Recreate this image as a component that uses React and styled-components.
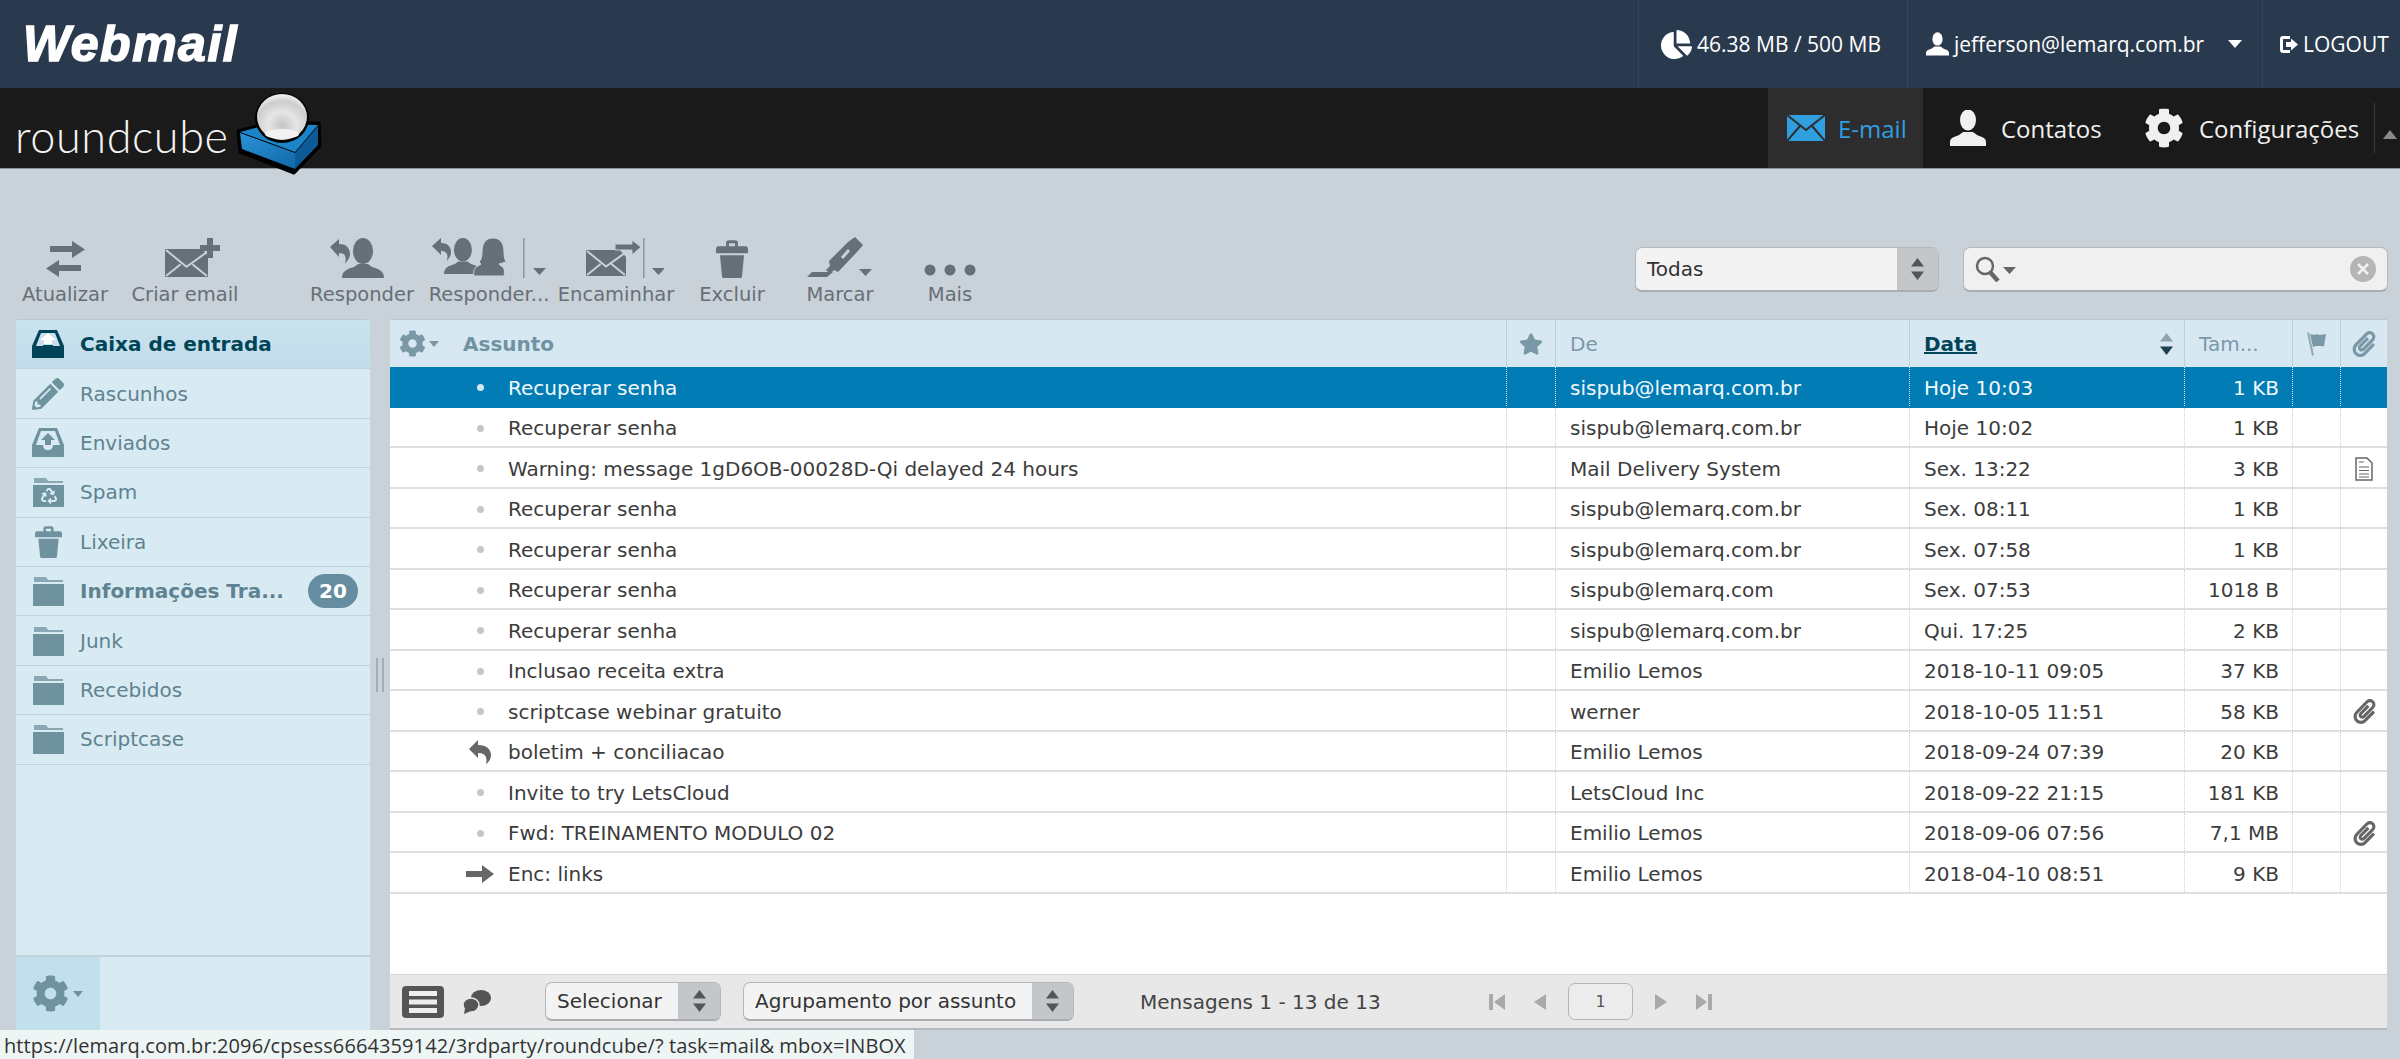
import styled, { createGlobalStyle } from "styled-components";
import { FaCog, FaChartPie, FaStar, FaPaperclip, FaPencilAlt, FaRecycle } from "react-icons/fa";

const PAGE_BG = "#c9d1d9";

const folders = [
  { name: "Caixa de entrada", icon: "inbox", active: true },
  { name: "Rascunhos", icon: "pencil" },
  { name: "Enviados", icon: "sent" },
  { name: "Spam", icon: "spam" },
  { name: "Lixeira", icon: "trash" },
  { name: "Informações Tra...", icon: "folder", unread: 20 },
  { name: "Junk", icon: "folder" },
  { name: "Recebidos", icon: "folder" },
  { name: "Scriptcase", icon: "folder" },
];

const messages = [
  { subject: "Recuperar senha", from: "sispub@lemarq.com.br", date: "Hoje 10:03", size: "1 KB", selected: true },
  { subject: "Recuperar senha", from: "sispub@lemarq.com.br", date: "Hoje 10:02", size: "1 KB" },
  { subject: "Warning: message 1gD6OB-00028D-Qi delayed 24 hours", from: "Mail Delivery System", date: "Sex. 13:22", size: "3 KB", attach: "doc" },
  { subject: "Recuperar senha", from: "sispub@lemarq.com.br", date: "Sex. 08:11", size: "1 KB" },
  { subject: "Recuperar senha", from: "sispub@lemarq.com.br", date: "Sex. 07:58", size: "1 KB" },
  { subject: "Recuperar senha", from: "sispub@lemarq.com", date: "Sex. 07:53", size: "1018 B" },
  { subject: "Recuperar senha", from: "sispub@lemarq.com.br", date: "Qui. 17:25", size: "2 KB" },
  { subject: "Inclusao receita extra", from: "Emilio Lemos", date: "2018-10-11 09:05", size: "37 KB" },
  { subject: "scriptcase webinar gratuito", from: "werner", date: "2018-10-05 11:51", size: "58 KB", attach: "clip" },
  { subject: "boletim + conciliacao", from: "Emilio Lemos", date: "2018-09-24 07:39", size: "20 KB", status: "replied" },
  { subject: "Invite to try LetsCloud", from: "LetsCloud Inc", date: "2018-09-22 21:15", size: "181 KB" },
  { subject: "Fwd: TREINAMENTO MODULO 02", from: "Emilio Lemos", date: "2018-09-06 07:56", size: "7,1 MB", attach: "clip" },
  { subject: "Enc: links", from: "Emilio Lemos", date: "2018-04-10 08:51", size: "9 KB", status: "forwarded" },
];

const GlobalStyle = createGlobalStyle`
  html, body {
    margin: 0;
    height: 1059px;
    overflow: hidden;
    background: ${PAGE_BG};
    font-family: "DejaVu Sans", Verdana, sans-serif;
  }
`;

/* ---------- drawn icons ---------- */

const Bust = ({ x = 0, scale = 1 }) => (
  <g transform={`translate(${x} 0) scale(${scale})`}>
    <ellipse cx="21" cy="13" rx="10" ry="13" />
    <path d="M0 40c0-7 5-9 12-11l4-3h10l4 3c7 2 12 4 12 11z" />
  </g>
);

const Caret = ({ x, y = 32 }) => <path d={`M${x} ${y}h13l-6.5 7z`} />;

const MailShape = ({ x = 0, y = 0, w = 43, h = 28 }) => (
  <g transform={`translate(${x} ${y})`}>
    <path d={`M0 0h${w - 6}l6 7v${h - 7}H0z`} />
    <path
      d={`M1 1l${w / 2 - 1} ${h * 0.6} ${w / 2 - 2} ${-h * 0.5}M1 ${h - 1}l${w * 0.34} ${-h * 0.42}M${w - 1} ${h - 1}l${-w * 0.34} ${-h * 0.42}`}
      fill="none"
      stroke={PAGE_BG}
      strokeWidth="2"
    />
  </g>
);

const RefreshIcon = () => (
  <svg width="40" height="40" viewBox="0 0 40 40" fill="currentColor">
    <path d="M5 8h22V3l13 8.5L27 20v-6H5z" />
    <path d="M36 27H14v-5L1 30.5 14 39v-6h22z" />
  </svg>
);

const ComposeIcon = () => (
  <svg width="72" height="40" viewBox="-12 0 72 40" fill="currentColor">
    <MailShape x="4" y="11" w="43" h="28" />
    <path d="M46 0h6v7h7v6h-7v7h-6v-7h-7V7h7z" />
  </svg>
);

const ReplyIcon = () => (
  <svg width="68" height="40" viewBox="0 0 68 40" fill="currentColor">
    <path d="M2 9l9-8v5c8 0 11 5 11 10 0 4-3 7-5 10 1-5 2-11-6-11v4z" />
    <Bust x="14" />
  </svg>
);

const ReplyAllIcon = () => (
  <svg width="118" height="42" viewBox="0 0 118 42" fill="currentColor">
    <path d="M2 10l9-8v5c7 0 10 4 10 9 0 4-2 6-4 9 1-5 1-10-6-10v4z" />
    <g transform="translate(14 2) scale(.9)">
      <Bust />
    </g>
    <path d="M52 16c0-9 4-14 11-14s11 5 11 14c0 5 1 8 2 10l-7 2 2 2c5 1 3 10 3 10H44s-2-8 4-10l3-2-2-2c2-2 3-5 3-10z" stroke={PAGE_BG} strokeWidth="1" />
    <rect x="93" y="2" width="1.5" height="40" opacity=".6" />
    <Caret x="103" y="32" />
  </svg>
);

const ForwardIcon = () => (
  <svg width="96" height="42" viewBox="0 0 96 42" fill="currentColor">
    <MailShape x="18" y="14" w="40" h="26" />
    <path d="M47 8h17V4l9 7-9 8v-5H47z" stroke={PAGE_BG} strokeWidth="1" />
    <rect x="75" y="2" width="1.5" height="40" opacity=".6" />
    <Caret x="84" y="32" />
  </svg>
);

const TrashIcon = ({ size = 32 }) => (
  <svg width={size} height={size * 1.2} viewBox="0 0 32 38" fill="currentColor">
    <path d="M10 6V3c0-2 1-3 3-3h6c2 0 3 1 3 3v3h8c1 0 2 1 2 3v4H0V9c0-2 1-3 2-3zM13 6h6V3h-6z" />
    <path d="M4 15h24l-2 21c0 1-1 2-2 2H8c-1 0-2-1-2-2z" />
  </svg>
);

const MarkIcon = () => (
  <svg width="70" height="42" viewBox="0 0 70 42" fill="currentColor">
    <path d="M50 1l8 8-6 7-19 20-4-2-4 4-4-4 4-4-1-5 19-19z" />
    <path d="M37 22l7-8" stroke={PAGE_BG} strokeWidth="3" fill="none" />
    <path d="M2 41l5-5h21l-6 5z" />
    <Caret x="54" y="33" />
  </svg>
);

const DotsIcon = () => (
  <svg width="56" height="40" viewBox="0 0 56 40" fill="currentColor">
    <circle cx="8" cy="32" r="5.5" />
    <circle cx="28" cy="32" r="5.5" />
    <circle cx="48" cy="32" r="5.5" />
  </svg>
);

const EnvelopeIcon = () => (
  <svg width="38" height="26" viewBox="0 0 38 26" fill="currentColor">
    <path d="M0 0h38v26H0z" />
    <path d="M0 0l19 15L38 0M0 26l13-15M38 26L25 11" fill="none" stroke="#2d2d2d" strokeWidth="2" />
  </svg>
);

const PersonIcon = ({ w = 36, h = 36 }) => (
  <svg width={w} height={h} viewBox="0 0 36 36" fill="currentColor">
    <ellipse cx="18" cy="10" rx="8" ry="10.5" />
    <path d="M0 36v-4c0-4 4-5 9-7l4-3h10l4 3c5 2 9 3 9 7v4z" />
  </svg>
);

const LogoutIcon = () => (
  <svg width="18" height="17" viewBox="0 0 18 17" fill="currentColor">
    <path d="M10 0H3C1 0 0 1 0 3v11c0 2 1 3 3 3h7v-3H4c-1 0-1 0-1-1V4c0-1 0-1 1-1h6z" />
    <path d="M6 6h5V2.500L18 8.500l-7 6V11H6z" />
  </svg>
);

const SearchIcon = () => (
  <svg width="42" height="26" viewBox="0 0 42 26" fill="none" stroke="currentColor">
    <circle cx="10" cy="10" r="8" strokeWidth="2.500" />
    <path d="M15 16l8 9" strokeWidth="4.500" />
    <path d="M28 11h13l-6.500 7z" fill="currentColor" stroke="none" />
  </svg>
);

const ClearIcon = () => (
  <svg width="26" height="26" viewBox="0 0 26 26">
    <circle cx="13" cy="13" r="13" fill="#b5b5b5" />
    <path d="M8 8l10 10M18 8L8 18" stroke="#f2f2f2" strokeWidth="2.500" />
  </svg>
);

const UpDown = ({ color = "#555" }) => (
  <svg width="13" height="22" viewBox="0 0 13 22" fill={color}>
    <path d="M6.500 0L13 8.500H0zM0 13.500h13L6.500 22z" />
  </svg>
);

const FolderShape = () => (
  <svg width="31" height="30" viewBox="0 0 31 30" fill="currentColor">
    <path d="M1 1h12l2 3h15v2H1z" opacity=".75" />
    <path d="M0 8h31v22H0z" />
  </svg>
);

const FolderIcon = ({ kind }) => {
  if (kind === "pencil") return <FaPencilAlt size={32} />;
  if (kind === "trash") return <TrashIcon size={27} />;
  if (kind === "folder") return <FolderShape />;
  if (kind === "spam")
    return (
      <SpamWrap>
        <FolderShape />
        <FaRecycle size={16} />
      </SpamWrap>
    );
  if (kind === "sent")
    return (
      <svg width="32" height="29" viewBox="0 0 32 29" fill="currentColor">
        <path fillRule="evenodd" d="M7 0h18l7 17v12H0V17zM9 3L4 17h7c0 3 2 5 5 5s5-2 5-5h7L23 3z" />
        <path d="M16 5l7 7h-4v5h-6v-5H9z" />
      </svg>
    );
  return (
    <svg width="32" height="28" viewBox="0 0 32 28" fill="currentColor">
      <path fillRule="evenodd" d="M7 0h18l7 16v12H0V16zM9 3L4 16h7v-1h10v1h7L23 3z" />
      <path d="M16 3l8 7h-4v4h-8v-4H8z" fill="#fff" />
    </svg>
  );
};

const FlagIcon = () => (
  <svg width="20" height="24" viewBox="0 0 20 24" fill="currentColor">
    <path d="M0 1l2-1 5 23-2 1z" opacity=".75" />
    <path d="M3 2c4 2 7-1 10 1l6-1-2 12c-3 1-6-1-11 1z" />
  </svg>
);

const DocIcon = () => (
  <svg width="20" height="24" viewBox="0 0 20 24" fill="none" stroke="#666" strokeWidth="1.500">
    <path d="M2 1h11l5 5v17H2z" />
    <path d="M5 5h5M5 10h10M5 13.500h10M5 17h10M5 20h10" strokeWidth="1.200" />
  </svg>
);

const RepliedIcon = () => (
  <svg width="22" height="24" viewBox="0 0 22 24" fill="#666">
    <path d="M0 9l9-9v5c8 0 13 4 13 10 0 4-2 7-5 9 1-5 1-11-8-11v5z" />
  </svg>
);

const ForwardedIcon = () => (
  <svg width="28" height="18" viewBox="0 0 28 18" fill="#666">
    <path d="M0 6h16V0l12 9-12 9v-6H0z" />
  </svg>
);

const ListViewIcon = () => (
  <svg width="42" height="32" viewBox="0 0 42 32">
    <rect width="42" height="32" rx="4" fill="#555" />
    <path d="M7 5h28v5H7zM7 13.500h28v5H7zM7 22h28v5H7z" fill="#eee" />
  </svg>
);

const ThreadIcon = () => (
  <svg width="28" height="24" viewBox="0 0 28 24" fill="#555">
    <ellipse cx="18" cy="8" rx="10" ry="8" />
    <ellipse cx="8" cy="15" rx="8" ry="7" stroke="#e8e8e8" strokeWidth="1.500" />
    <path d="M2 18l-1 6 7-3z" />
  </svg>
);

const PagerFirst = () => (
  <svg width="16" height="16" viewBox="0 0 16 16" fill="#a9a9a9">
    <path d="M0 0h4v16H0zM16 0v16L5 8z" />
  </svg>
);
const PagerPrev = () => (
  <svg width="12" height="16" viewBox="0 0 12 16" fill="#a9a9a9">
    <path d="M12 0v16L0 8z" />
  </svg>
);
const PagerNext = () => (
  <svg width="12" height="16" viewBox="0 0 12 16" fill="#a9a9a9">
    <path d="M0 0v16l12-8z" />
  </svg>
);
const PagerLast = () => (
  <svg width="16" height="16" viewBox="0 0 16 16" fill="#a9a9a9">
    <path d="M0 0v16l11-8zM12 0h4v16h-4z" />
  </svg>
);

const CubeLogo = () => (
  <CubeSvg width="90" height="84" viewBox="15 2 90 84">
    <defs>
      <radialGradient id="ball" cx="50%" cy="68%" r="72%">
        <stop offset="0" stopColor="#c4c4c4" />
        <stop offset=".4" stopColor="#e6e6e6" />
        <stop offset=".72" stopColor="#cdcdcd" />
        <stop offset="1" stopColor="#fdfdfd" />
      </radialGradient>
      <linearGradient id="blue" x1="0" y1="0" x2="1" y2="1">
        <stop offset="0" stopColor="#2a93d6" />
        <stop offset="1" stopColor="#1168a8" />
      </linearGradient>
    </defs>
    <path d="M18 41l30-8 51 0 1 23L74 83 20 62z" fill="#000" stroke="#000" strokeWidth="3" strokeLinejoin="round" />
    <path d="M20 42l30-8 48 1-23 27z" fill="#1c84c8" />
    <path d="M20 43l55 20v16L22 59z" fill="url(#blue)" />
    <path d="M75 63l23-27v19L75 79z" fill="#0c5a96" />
    <ellipse cx="62" cy="28" rx="27" ry="25" fill="#000" />
    <ellipse cx="62" cy="27" rx="25" ry="23" fill="url(#ball)" />
    <ellipse cx="62" cy="44" rx="17" ry="5" fill="#f2f2f2" />
  </CubeSvg>
);

/* ---------- page ---------- */

export default function App() {
  return (
    <Page>
      <GlobalStyle />
      <TopBar>
        <WebmailLogo>Webmail</WebmailLogo>
        <TopItem $width={269} $pad={22}>
          <FaChartPie size={31} />
          <span>46.38 MB / 500 MB</span>
        </TopItem>
        <TopItem $width={355} $pad={18}>
          <PersonIcon w={23} h={26} />
          <span>jefferson@lemarq.com.br</span>
          <TopCaret />
        </TopItem>
        <TopItem $width={138} $pad={17}>
          <LogoutIcon />
          <span>LOGOUT</span>
        </TopItem>
      </TopBar>

      <NavBar>
        <Brand>
          <BrandName>roundcube</BrandName>
          <CubeLogo />
        </Brand>
        <NavTab $active $width={155}>
          <EnvelopeIcon />
          <span>E-mail</span>
        </NavTab>
        <NavTab $width={194}>
          <PersonIcon />
          <span>Contatos</span>
        </NavTab>
        <NavTab $width={257}>
          <FaCog size={40} />
          <span>Configurações</span>
        </NavTab>
        <NavCollapse />
      </NavBar>

      <Toolbar>
        <ToolButton $width={96}>
          <ToolIcon><RefreshIcon /></ToolIcon>
          <ToolLabel>Atualizar</ToolLabel>
        </ToolButton>
        <ToolButton $width={144}>
          <ToolIcon><ComposeIcon /></ToolIcon>
          <ToolLabel>Criar email</ToolLabel>
        </ToolButton>
        <ToolButton $width={128} $gap={41}>
          <ToolIcon><ReplyIcon /></ToolIcon>
          <ToolLabel>Responder</ToolLabel>
        </ToolButton>
        <ToolButton $width={126}>
          <ToolIcon><ReplyAllIcon /></ToolIcon>
          <ToolLabel>Responder...</ToolLabel>
        </ToolButton>
        <ToolButton $width={128}>
          <ToolIcon><ForwardIcon /></ToolIcon>
          <ToolLabel>Encaminhar</ToolLabel>
        </ToolButton>
        <ToolButton $width={104}>
          <ToolIcon><TrashIcon /></ToolIcon>
          <ToolLabel>Excluir</ToolLabel>
        </ToolButton>
        <ToolButton $width={112}>
          <ToolIcon><MarkIcon /></ToolIcon>
          <ToolLabel>Marcar</ToolLabel>
        </ToolButton>
        <ToolButton $width={108}>
          <ToolIcon><DotsIcon /></ToolIcon>
          <ToolLabel>Mais</ToolLabel>
        </ToolButton>
        <Filters>
          <SelectBox $width={304} $height={45}>
            <span>Todas</span>
            <SelectArrow $width={41}><UpDown /></SelectArrow>
          </SelectBox>
          <SearchBox>
            <SearchIcon />
            <ClearIcon />
          </SearchBox>
        </Filters>
      </Toolbar>

      <Main>
        <Sidebar>
          <FolderList>
            {folders.map((f) => (
              <FolderRow key={f.name} $active={f.active} $bold={f.unread}>
                <FolderIconBox $active={f.active}><FolderIcon kind={f.icon} /></FolderIconBox>
                <FolderName>{f.name}</FolderName>
                {f.unread && <Badge>{f.unread}</Badge>}
              </FolderRow>
            ))}
          </FolderList>
          <SidebarFooter>
            <GearBox>
              <FaCog size={37} />
              <SmallCaret />
            </GearBox>
          </SidebarFooter>
        </Sidebar>

        <Splitter>
          <Grip />
        </Splitter>

        <ListPanel>
          <HeadRow>
            <HeadCell>
              <HeadGear>
                <FaCog size={27} />
                <SmallCaret />
              </HeadGear>
              <strong>Assunto</strong>
            </HeadCell>
            <HeadCell $center><FaStar size={24} /></HeadCell>
            <HeadCell $pad>De</HeadCell>
            <HeadCell $pad $sorted>
              <u>Data</u>
              <SortArrows><UpDownSort /></SortArrows>
            </HeadCell>
            <HeadCell $pad>Tam...</HeadCell>
            <HeadCell $center><FlagIcon /></HeadCell>
            <HeadCell $center $last><FaPaperclip size={26} /></HeadCell>
          </HeadRow>
          <Rows>
            {messages.map((m, i) => (
              <MsgRow key={i} $selected={m.selected}>
                <SubjectCell>
                  <StatusSlot>
                    {m.status === "replied" && <RepliedIcon />}
                    {m.status === "forwarded" && <ForwardedIcon />}
                    {!m.status && <Dot $selected={m.selected} />}
                  </StatusSlot>
                  {m.subject}
                </SubjectCell>
                <Cell />
                <Cell $pad>{m.from}</Cell>
                <Cell $pad>{m.date}</Cell>
                <Cell $right>{m.size}</Cell>
                <Cell />
                <Cell $last $center>
                  {m.attach === "doc" && <DocIcon />}
                  {m.attach === "clip" && <ClipIcon size={25} />}
                </Cell>
              </MsgRow>
            ))}
          </Rows>
          <ListFooter>
            <ListViewIcon />
            <ThreadIcon />
            <SelectBox $width={176} $height={39} $left={54}>
              <span>Selecionar</span>
              <SelectArrow $width={42}><UpDown /></SelectArrow>
            </SelectBox>
            <SelectBox $width={331} $height={39} $left={22}>
              <span>Agrupamento por assunto</span>
              <SelectArrow $width={41}><UpDown /></SelectArrow>
            </SelectBox>
            <Counter>Mensagens 1 - 13 de 13</Counter>
            <Pager>
              <PagerFirst />
              <PagerPrev />
              <PageInput>1</PageInput>
              <PagerNext />
              <PagerLast />
            </Pager>
          </ListFooter>
        </ListPanel>
      </Main>

      <LinkHint>https://lemarq.com.br:2096/cpsess6664359142/3rdparty/roundcube/? task=mail& mbox=INBOX</LinkHint>
    </Page>
  );
}

const UpDownSort = () => (
  <svg width="13" height="22" viewBox="0 0 13 22">
    <path d="M6.500 0L13 8.500H0z" fill="#8fa5b1" />
    <path d="M0 13.500h13L6.500 22z" fill="#1d3f52" />
  </svg>
);

const Page = styled.div`
  position: relative;
  width: 2400px;
  height: 1059px;
  overflow: hidden;
  background: ${PAGE_BG};
`;

const TopBar = styled.header`
  height: 88px;
  display: flex;
  align-items: stretch;
  background: #2a3a4e;
  color: #fff;
  font-family: "Open Sans", sans-serif;
  font-size: 21px;
`;

const WebmailLogo = styled.div`
  margin: 0 auto 0 23px;
  align-self: center;
  font-family: "Liberation Sans", sans-serif;
  font-weight: 700;
  font-style: italic;
  font-size: 50px;
  line-height: 50px;
  letter-spacing: 1.5px;
  -webkit-text-stroke: 1.5px #fff;
`;

const TopItem = styled.div`
  width: ${(p) => p.$width}px;
  padding-left: ${(p) => p.$pad}px;
  box-sizing: border-box;
  display: flex;
  align-items: center;
  gap: 5px;
  border-left: 1px solid #33455a;
  white-space: nowrap;
`;

const TopCaret = styled.i`
  margin-left: 19px;
  width: 0;
  height: 0;
  border-left: 7px solid transparent;
  border-right: 7px solid transparent;
  border-top: 8px solid #fff;
`;

const NavBar = styled.nav`
  height: 81px;
  box-sizing: border-box;
  display: flex;
  align-items: stretch;
  background: #1a1a1a;
  border-bottom: 1px solid #8d959c;
  font-family: "Open Sans", sans-serif;
  font-size: 24px;
  color: #f0f0f0;
`;

const Brand = styled.div`
  margin-right: auto;
  padding-left: 15px;
  display: flex;
  align-items: flex-start;
  gap: 6px;
`;

const BrandName = styled.div`
  margin-top: 23px;
  font-family: "Lato", sans-serif;
  font-weight: 300;
  font-size: 45px;
  line-height: 50px;
  letter-spacing: 0.6px;
  color: #f4f4f4;
`;

const CubeSvg = styled.svg`
  margin-top: 4px;
  position: relative;
  z-index: 2;
`;

const NavTab = styled.div`
  width: ${(p) => p.$width}px;
  box-sizing: border-box;
  padding-left: ${(p) => (p.$active ? 19 : 27)}px;
  display: flex;
  align-items: center;
  gap: ${(p) => (p.$active ? 13 : 15)}px;
  background: ${(p) => (p.$active ? "#2d2d2d" : "transparent")};
  color: ${(p) => (p.$active ? "#2f9fe0" : "#f0f0f0")};
  svg {
    flex: none;
  }
`;

const NavCollapse = styled.div`
  width: 26px;
  margin: 15px 0;
  box-sizing: border-box;
  border-left: 1px solid #3a3a3a;
  position: relative;
  &::after {
    content: "";
    position: absolute;
    left: 8px;
    top: 27px;
    border-left: 7px solid transparent;
    border-right: 7px solid transparent;
    border-bottom: 9px solid #8a8a8a;
  }
`;

const Toolbar = styled.div`
  height: 150px;
  box-sizing: border-box;
  padding: 69px 12px 0 17px;
  display: flex;
  align-items: flex-start;
  color: #667079;
`;

const ToolButton = styled.div`
  width: ${(p) => p.$width}px;
  margin-left: ${(p) => p.$gap || 0}px;
  display: flex;
  flex-direction: column;
  align-items: center;
`;

const ToolIcon = styled.div`
  height: 42px;
  display: flex;
  align-items: flex-end;
  justify-content: center;
  margin-top: -2px;
`;

const ToolLabel = styled.div`
  margin-top: 7px;
  font-size: 19.5px;
  line-height: 20px;
  white-space: nowrap;
  color: #666f78;
`;

const Filters = styled.div`
  margin: 9px 0 0 auto;
  display: flex;
  gap: 24px;
`;

const SelectBox = styled.div`
  width: ${(p) => p.$width}px;
  height: ${(p) => p.$height}px;
  margin-left: ${(p) => p.$left || 0}px;
  box-sizing: border-box;
  flex: none;
  padding-left: 11px;
  display: flex;
  align-items: center;
  justify-content: space-between;
  border: 1px solid #b5b8bb;
  border-bottom: 2px solid #a9acb0;
  border-radius: 7px;
  overflow: hidden;
  background: #f3f3f3;
  color: #333;
  font-size: 20px;
  white-space: nowrap;
`;

const SelectArrow = styled.div`
  width: ${(p) => p.$width}px;
  align-self: stretch;
  display: flex;
  align-items: center;
  justify-content: center;
  background: #c4c7c9;
`;

const SearchBox = styled.div`
  width: 425px;
  height: 45px;
  box-sizing: border-box;
  padding: 0 11px;
  display: flex;
  align-items: center;
  justify-content: space-between;
  border: 1px solid #b5b8bb;
  border-bottom: 2px solid #a9acb0;
  border-radius: 7px;
  background: #f0f0f0;
  color: #666;
`;

const Main = styled.main`
  height: 711px;
  padding-left: 16px;
  display: flex;
  align-items: stretch;
`;

const Sidebar = styled.aside`
  width: 354px;
  display: flex;
  flex-direction: column;
  background: #d8ebf3;
  border-top: 1px solid #b7c8d2;
  border-radius: 3px 3px 0 0;
  box-sizing: border-box;
`;

const FolderList = styled.div`
  flex: 1;
`;

const FolderRow = styled.div`
  height: 49.4px;
  box-sizing: border-box;
  padding-left: 16px;
  display: flex;
  align-items: center;
  border-bottom: 1px solid #bfd3dd;
  background: ${(p) => (p.$active ? "linear-gradient(#c9e2ee, #c2dcea)" : "transparent")};
  color: ${(p) => (p.$active ? "#004458" : "#5f8291")};
  font-size: 20px;
  font-weight: ${(p) => (p.$active || p.$bold ? 700 : 400)};
`;

const FolderIconBox = styled.div`
  width: 32px;
  height: 34px;
  flex: none;
  display: flex;
  align-items: center;
  justify-content: center;
  color: ${(p) => (p.$active ? "#004458" : "#6f929f")};
`;

const SpamWrap = styled.div`
  position: relative;
  line-height: 0;
  svg:last-child {
    position: absolute;
    left: 8px;
    top: 11px;
    color: #d8ebf3;
  }
`;

const FolderName = styled.span`
  margin-left: 16px;
  white-space: nowrap;
`;

const Badge = styled.span`
  margin-left: auto;
  margin-right: 12px;
  width: 50px;
  height: 34px;
  border-radius: 17px;
  display: flex;
  align-items: center;
  justify-content: center;
  background: #658d9f;
  color: #fff;
  font-size: 20px;
  font-weight: 700;
`;

const SidebarFooter = styled.div`
  height: 75px;
  border-top: 2px solid #bfd3dd;
  box-sizing: border-box;
`;

const GearBox = styled.div`
  width: 84px;
  height: 100%;
  padding-left: 16px;
  box-sizing: border-box;
  display: flex;
  align-items: center;
  gap: 4px;
  background: #c2dfec;
  color: #6f929f;
`;

const SmallCaret = styled.i`
  width: 0;
  height: 0;
  border-left: 5px solid transparent;
  border-right: 5px solid transparent;
  border-top: 6px solid currentColor;
`;

const Splitter = styled.div`
  width: 20px;
  display: flex;
  align-items: flex-start;
  justify-content: center;
  padding-top: 339px;
  box-sizing: border-box;
`;

const Grip = styled.div`
  width: 8px;
  height: 34px;
  box-sizing: border-box;
  border-left: 2px solid #a5adb4;
  border-right: 2px solid #a5adb4;
`;

const ListPanel = styled.section`
  width: 1997px;
  display: flex;
  flex-direction: column;
  background: #fff;
  border-bottom: 2px solid #b3b9be;
  box-sizing: border-box;
`;

const COLUMNS = "1117px 49px 354px 275px 108px 48px 46px";

const HeadRow = styled.div`
  height: 48px;
  flex: none;
  display: grid;
  grid-template-columns: ${COLUMNS};
  background: #d8e8f2;
  border-top: 1px solid #b7c8d2;
  box-sizing: border-box;
`;

const HeadCell = styled.div`
  display: flex;
  align-items: center;
  justify-content: ${(p) => (p.$center ? "center" : "flex-start")};
  padding-left: ${(p) => (p.$pad ? "14px" : "0")};
  border-right: ${(p) => (p.$last ? "none" : "1px solid #bccfdb")};
  box-sizing: border-box;
  font-size: 20px;
  color: ${(p) => (p.$sorted ? "#004458" : "#7b98a7")};
  font-weight: ${(p) => (p.$sorted ? 700 : 400)};
  strong {
    color: #6f93a3;
  }
`;

const HeadGear = styled.span`
  width: 73px;
  padding-left: 9px;
  box-sizing: border-box;
  display: flex;
  align-items: center;
  gap: 3px;
`;

const SortArrows = styled.span`
  margin-left: auto;
  margin-right: 11px;
  display: flex;
`;

const Rows = styled.div`
  flex: 1;
`;

const MsgRow = styled.div`
  height: 40.5px;
  box-sizing: border-box;
  display: grid;
  grid-template-columns: ${COLUMNS};
  font-size: 20px;
  background: ${(p) => (p.$selected ? "#017cb4" : "#fff")};
  color: ${(p) => (p.$selected ? "#f2f8fb" : "#3c3c3c")};
  border-bottom: 2px solid ${(p) => (p.$selected ? "#017cb4" : "#dfdfdf")};
  & > div {
    border-right-color: ${(p) => (p.$selected ? "#d6e8f2" : "#c9d1d6")};
  }
`;

const Cell = styled.div`
  display: flex;
  align-items: center;
  justify-content: ${(p) => (p.$right ? "flex-end" : p.$center ? "center" : "flex-start")};
  padding: 3px ${(p) => (p.$right ? "13px" : "0")} 0 ${(p) => (p.$pad ? "14px" : "0")};
  border-right: ${(p) => (p.$last ? "none" : "1px dotted #c9d1d6")};
  box-sizing: border-box;
  white-space: nowrap;
`;

const SubjectCell = styled(Cell)`
  padding-left: 70px;
`;

const StatusSlot = styled.span`
  width: 40px;
  margin-right: 8px;
  display: flex;
  align-items: center;
  justify-content: center;
  flex: none;
`;

const Dot = styled.i`
  width: 7px;
  height: 7px;
  border-radius: 50%;
  background: ${(p) => (p.$selected ? "#d4e7f1" : "#c6c6c6")};
`;

const ClipIcon = styled(FaPaperclip)`
  color: #666;
`;

const ListFooter = styled.div`
  height: 54px;
  flex: none;
  padding-left: 12px;
  box-sizing: border-box;
  display: flex;
  align-items: center;
  background: #e8e8e8;
  border-top: 1px solid #d6d6d6;
  color: #444;
  font-size: 20px;
  & > svg:nth-child(2) {
    margin-left: 19px;
  }
`;

const Counter = styled.span`
  margin-left: 66px;
  width: 349px;
  white-space: nowrap;
`;

const Pager = styled.div`
  display: flex;
  align-items: center;
  gap: 29px;
  & > div {
    margin: 0 -7px;
  }
`;

const PageInput = styled.div`
  width: 65px;
  height: 37px;
  box-sizing: border-box;
  display: flex;
  align-items: center;
  justify-content: center;
  border: 1px solid #b5b5b5;
  border-radius: 7px;
  background: #ececec;
  color: #555;
  font-size: 16px;
`;

const LinkHint = styled.div`
  position: absolute;
  left: 0;
  top: 1030px;
  width: 914px;
  height: 29px;
  box-sizing: border-box;
  padding: 2px 0 0 4px;
  background: #eef5f5;
  color: #333;
  font-family: "Open Sans", sans-serif;
  font-size: 20px;
  line-height: 27px;
  letter-spacing: 0.1px;
  white-space: nowrap;
`;
